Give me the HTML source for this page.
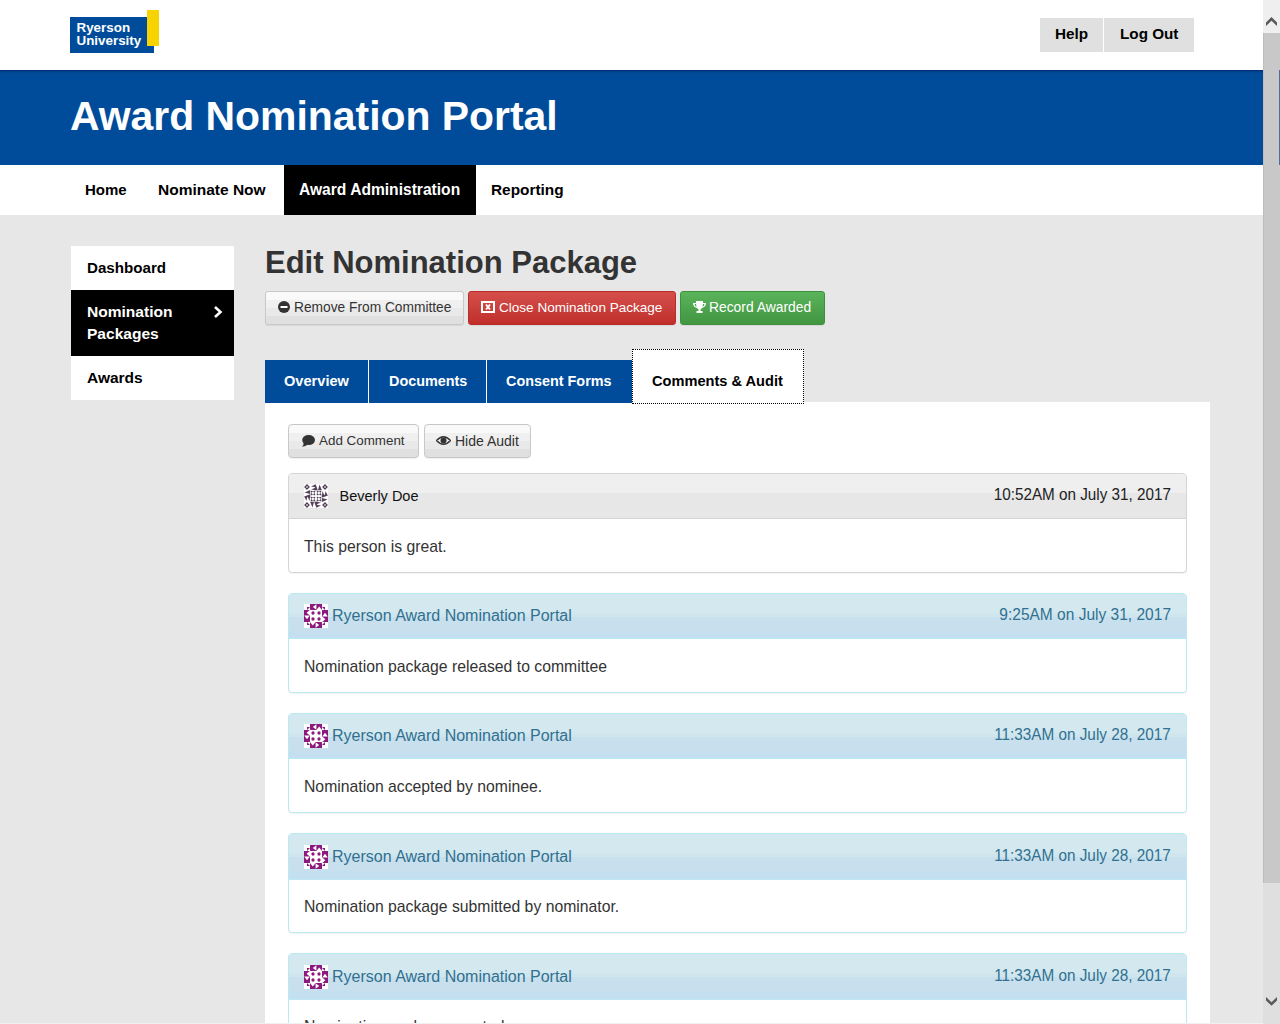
<!DOCTYPE html>
<html><head><meta charset="utf-8">
<style>
*{box-sizing:border-box;margin:0;padding:0}
html,body{width:1280px;height:1024px;overflow:hidden}
body{font-family:"Liberation Sans",sans-serif;background:#e7e7e7;position:relative;color:#333}
.a{position:absolute}
.t{position:absolute;white-space:nowrap;line-height:1}
.b{font-weight:bold}
#top{left:0;top:0;width:1263px;height:70px;background:#fff}
#band{left:0;top:70px;width:1263px;height:95px;background:linear-gradient(#002a6e 0,#003a85 1px,#00438f 2px,#004896 3px,#004c9a 4px)}
#nav{left:0;top:165px;width:1263px;height:50px;background:#fff}
.tbtn{top:18px;height:34px;background:#e0e0e0}
.nav{font-weight:bold;font-size:15px;color:#000;top:182px}
#side{left:71px;top:246px;width:163px;height:154px;background:#fff}
.side{font-weight:bold;font-size:15px;color:#000;left:87px}
.btn{position:absolute;border:1px solid #c8c8c8;border-radius:4px;box-shadow:0 1px 1px rgba(0,0,0,.07)}
.bdef{background:linear-gradient(#f9f9f9 0,#f9f9f9 8px,#f0f0f0 8px,#f0f0f0 16px,#e9e9e9 16px,#e9e9e9 24px,#e0e0e0 24px)}
.bdan{border-color:#b92c28;background:linear-gradient(#d64e4b,#c9403c 50%,#c12e2a)}
.bsuc{border-color:#3e8f3e;background:linear-gradient(#5ab45a,#4ea54e 50%,#429642)}
.bt{font-size:14px;top:9px}
.tab{position:absolute;top:360px;height:43px;background:#004c9a}
.tabt{font-weight:bold;font-size:15px;color:#fff;top:374px}
#content{left:265px;top:402px;width:945px;height:621px;background:#fff}
.panel{position:absolute;left:288px;width:899px;height:100px;border:1px solid #d5d5d5;border-radius:4px;background:#fff;box-shadow:0 1px 1px rgba(0,0,0,.05);overflow:hidden}
.ph{position:absolute;left:0;top:0;right:0;height:45px;background:linear-gradient(#efefef 0,#efefef 19px,#e7e7e7 19px);border-bottom:1px solid #d5d5d5}
.info{border-color:#bce8f1}
.tall .ph{height:46px}.tall .av{top:11px}.tall .pt{top:15px}.tall .dt{top:14px}
.info .ph{background:linear-gradient(#d3e8ef 0,#d3e8ef 19px,#cfe6ee 19px,#cfe6ee 23px,#c8e0ee 23px,#c8e0ee 37px,#c3dff0 37px);border-bottom-color:#bce8f1}
.pt{font-size:16px;top:14px;color:#333}
.info .pt{color:#31708f}
.dt{font-size:16px;top:13px;right:15px;color:#333;transform-origin:100% 50%;transform:scaleX(.956)}
.info .dt{color:#31708f}
.pb{font-size:15.75px;top:65px;left:15px;color:#333}
.av{position:absolute;left:15px;top:10px;width:24px;height:24px}
#sb{left:1263px;top:0;width:17px;height:1024px;background:#dfdfdf}
</style></head><body>
<svg width="0" height="0" style="position:absolute"><defs><symbol id="idm" viewBox="0 0 24 24"><rect width="24" height="24" fill="#fff"/><polygon points="6,0 18,0 18,6 6,6" fill="#8c1a7e"/><polygon points="24,6 24,18 18,18 18,6" fill="#8c1a7e"/><polygon points="18,24 6,24 6,18 18,18" fill="#8c1a7e"/><polygon points="0,18 0,6 6,6 6,18" fill="#8c1a7e"/><polygon points="12.4,0.2 8.8,3 12.4,5.8" fill="#fff"/><polygon points="12,6.4 15.2,2.6 18.4,6.4" fill="#fff"/><polygon points="3,3 6,3 3,6" fill="#8c1a7e"/><polygon points="23.8,12.4 21,8.8 18.2,12.4" fill="#fff"/><polygon points="17.6,12 21.4,15.2 17.6,18.4" fill="#fff"/><polygon points="21,3 21,6 18,3" fill="#8c1a7e"/><polygon points="11.6,23.8 15.2,21 11.6,18.2" fill="#fff"/><polygon points="12,17.6 8.8,21.4 5.6,17.6" fill="#fff"/><polygon points="21,21 18,21 21,18" fill="#8c1a7e"/><polygon points="0.2,11.6 3,15.2 5.8,11.6" fill="#fff"/><polygon points="6.4,12 2.6,8.8 6.4,5.6" fill="#fff"/><polygon points="3,21 3,18 6,21" fill="#8c1a7e"/><circle cx="9" cy="9" r="1.65" fill="#8c1a7e"/><circle cx="15" cy="9" r="1.65" fill="#8c1a7e"/><circle cx="9" cy="15" r="1.65" fill="#8c1a7e"/><circle cx="15" cy="15" r="1.65" fill="#8c1a7e"/></symbol><symbol id="idd" viewBox="0 0 24 24"><rect width="24" height="24" fill="#fff"/><path d="M3 0.1l2.9 2.9l-2.9 2.9l-2.9-2.9ZM3 2l1 1l-1 1l-1-1Z" fill="#544259" fill-rule="evenodd"/><polygon points="7,2.5 11.6,0.2 12.2,3.3" fill="#544259"/><polygon points="7,5.5 12,3.4 12.2,6.2" fill="#544259"/><polygon points="11.6,0.2 10.2,6.2 13.8,6.2" fill="#544259"/><polygon points="15.5,0.5 14,6.2 17.9,6.2" fill="#544259"/><path d="M21 0.1l2.9 2.9l-2.9 2.9l-2.9-2.9ZM21 2l1 1l-1 1l-1-1Z" fill="#544259" fill-rule="evenodd"/><polygon points="21.5,7 23.8,11.6 20.7,12.2" fill="#544259"/><polygon points="18.5,7 20.6,12 17.8,12.2" fill="#544259"/><polygon points="23.8,11.6 17.8,10.2 17.8,13.8" fill="#544259"/><polygon points="23.5,15.5 17.8,14 17.8,17.9" fill="#544259"/><path d="M21 18.1l2.9 2.9l-2.9 2.9l-2.9-2.9ZM21 20l1 1l-1 1l-1-1Z" fill="#544259" fill-rule="evenodd"/><polygon points="17,21.5 12.4,23.8 11.8,20.7" fill="#544259"/><polygon points="17,18.5 12,20.6 11.8,17.8" fill="#544259"/><polygon points="12.4,23.8 13.8,17.8 10.2,17.8" fill="#544259"/><polygon points="8.5,23.5 10,17.8 6.1,17.8" fill="#544259"/><path d="M3 18.1l2.9 2.9l-2.9 2.9l-2.9-2.9ZM3 20l1 1l-1 1l-1-1Z" fill="#544259" fill-rule="evenodd"/><polygon points="2.5,17 0.2,12.4 3.3,11.8" fill="#544259"/><polygon points="5.5,17 3.4,12 6.2,11.8" fill="#544259"/><polygon points="0.2,12.4 6.2,13.8 6.2,10.2" fill="#544259"/><polygon points="0.5,8.5 6.2,10 6.2,6.1" fill="#544259"/><rect x="7.5" y="7.5" width="2.9" height="2.9" fill="none" stroke="#544259" stroke-opacity="0.5" stroke-width="0.9"/><circle cx="7.5" cy="7.5" r="0.85" fill="#544259"/><circle cx="10.4" cy="7.5" r="0.85" fill="#544259"/><circle cx="7.5" cy="10.4" r="0.85" fill="#544259"/><circle cx="10.4" cy="10.4" r="0.85" fill="#544259"/><rect x="13.5" y="7.5" width="2.9" height="2.9" fill="none" stroke="#544259" stroke-opacity="0.5" stroke-width="0.9"/><circle cx="13.5" cy="7.5" r="0.85" fill="#544259"/><circle cx="16.4" cy="7.5" r="0.85" fill="#544259"/><circle cx="13.5" cy="10.4" r="0.85" fill="#544259"/><circle cx="16.4" cy="10.4" r="0.85" fill="#544259"/><rect x="7.5" y="13.5" width="2.9" height="2.9" fill="none" stroke="#544259" stroke-opacity="0.5" stroke-width="0.9"/><circle cx="7.5" cy="13.5" r="0.85" fill="#544259"/><circle cx="10.4" cy="13.5" r="0.85" fill="#544259"/><circle cx="7.5" cy="16.4" r="0.85" fill="#544259"/><circle cx="10.4" cy="16.4" r="0.85" fill="#544259"/><rect x="13.5" y="13.5" width="2.9" height="2.9" fill="none" stroke="#544259" stroke-opacity="0.5" stroke-width="0.9"/><circle cx="13.5" cy="13.5" r="0.85" fill="#544259"/><circle cx="16.4" cy="13.5" r="0.85" fill="#544259"/><circle cx="13.5" cy="16.4" r="0.85" fill="#544259"/><circle cx="16.4" cy="16.4" r="0.85" fill="#544259"/></symbol></defs></svg>
<div id="top" class="a"></div>
<div class="a" style="left:70px;top:17px;width:84px;height:36px;background:#004c9b"></div>
<div class="a" style="left:147px;top:10px;width:12px;height:36px;background:#f7d400"></div>
<div class="t b" style="left:76.5px;top:21px;font-size:13.4px;color:#fff">Ryerson</div>
<div class="t b" style="left:76.5px;top:34px;font-size:13.4px;color:#fff">University</div>
<div class="a tbtn" style="left:1040px;width:63px"></div>
<div class="a tbtn" style="left:1104px;width:90px"></div>
<div class="t b" style="left:1055px;top:26px;font-size:15.3px;color:#000">Help</div>
<div class="t b" style="left:1120px;top:26px;font-size:15.25px;color:#000">Log Out</div>

<div id="band" class="a"></div>
<div class="t b" style="left:70px;top:96px;font-size:40.9px;color:#fff">Award Nomination Portal</div>
<div id="nav" class="a"></div>
<div class="t nav" style="left:85px">Home</div>
<div class="t nav" style="left:158px;font-size:15.5px">Nominate Now</div>
<div class="a" style="left:284px;top:165px;width:192px;height:50px;background:#000"></div>
<div class="t nav" style="left:299px;color:#fff;font-size:15.6px">Award Administration</div>
<div class="t nav" style="left:491px;font-size:15.4px">Reporting</div>

<div id="side" class="a"></div>
<div class="t side" style="top:260px;font-size:15.15px">Dashboard</div>
<div class="a" style="left:71px;top:290px;width:163px;height:66px;background:#000"></div>
<div class="t side" style="top:304px;color:#fff;font-size:15.55px">Nomination</div>
<div class="t side" style="top:326px;color:#fff;font-size:15.55px">Packages</div>
<svg class="a" style="left:210px;top:303px" width="16" height="18" viewBox="0 0 16 18"><path d="M5 4 L10.5 9 L5 14" fill="none" stroke="#fff" stroke-width="2.6"/></svg>
<div class="t side" style="top:370px;font-size:15.5px">Awards</div>

<div class="t b" style="left:265px;top:247px;font-size:31px;color:#333">Edit Nomination Package</div>

<div class="btn bdef" style="left:265px;top:291px;width:199px;height:34px;border-radius:3px"></div>
<svg class="a" style="left:278px;top:301px" width="12" height="12" viewBox="0 0 12 12"><circle cx="6" cy="6" r="6" fill="#333"/><rect x="2.5" y="5" width="7" height="2" fill="#fff"/></svg>
<div class="t" style="left:294px;top:301px;font-size:13.75px;color:#333">Remove From Committee</div>

<div class="btn bdan" style="left:468px;top:291px;width:208px;height:34px;border-radius:3px"></div>
<svg class="a" style="left:481px;top:301px" width="14" height="12" viewBox="0 0 14 12"><rect x="1" y="1" width="12" height="10" fill="none" stroke="#fff" stroke-width="2"/><path d="M5 3.5 L9 8.5 M9 3.5 L5 8.5" stroke="#fff" stroke-width="2"/></svg>
<div class="t" style="left:499px;top:301px;font-size:13.55px;color:#fff">Close Nomination Package</div>

<div class="btn bsuc" style="left:680px;top:291px;width:145px;height:34px;border-radius:3px"></div>
<svg class="a" style="left:692px;top:301px" width="15" height="12" viewBox="0 0 15 12"><path d="M4 0 H11 V2 H14 Q14 6 10 7 Q9 8 8.5 8.5 V10 H10.5 V12 H4.5 V10 H6.5 V8.5 Q6 8 5 7 Q1 6 1 2 H4 Z M2.5 3 Q3 5.5 4.5 5.8 L4 3 Z M12.5 3 Q12 5.5 10.5 5.8 L11 3 Z" fill="#fff" fill-rule="evenodd"/></svg>
<div class="t" style="left:709px;top:301px;font-size:13.85px;color:#fff">Record Awarded</div>

<div id="content" class="a"></div>
<div class="tab" style="left:265px;width:103px"></div>
<div class="a" style="left:368px;top:360px;width:1px;height:43px;background:#fff"></div>
<div class="tab" style="left:369px;width:117px"></div>
<div class="a" style="left:486px;top:360px;width:1px;height:43px;background:#fff"></div>
<div class="tab" style="left:487px;width:145px"></div>
<div class="t tabt" style="left:284px;font-size:14.6px">Overview</div>
<div class="t tabt" style="left:389px;font-size:14.4px">Documents</div>
<div class="t tabt" style="left:506px;font-size:14.4px">Consent Forms</div>
<div class="a" style="left:632px;top:349px;width:172px;height:55px;background:#fff;border:1px dotted #000"></div>
<div class="t tabt" style="left:652px;color:#000;font-size:14.6px">Comments &amp; Audit</div>

<div class="btn bdef" style="left:288px;top:424px;width:131px;height:34px"></div>
<svg class="a" style="left:301px;top:435px" width="14" height="12" viewBox="0 0 14 12"><ellipse cx="7.6" cy="5.1" rx="6.4" ry="5" fill="#333"/><path d="M2.8 7 Q3 10.2 0.8 11.8 Q5 11.4 6.8 9.5 Z" fill="#333"/></svg>
<div class="t" style="left:319px;top:434px;font-size:13.4px;color:#333">Add Comment</div>
<div class="btn bdef" style="left:424px;top:424px;width:107px;height:34px"></div>
<svg class="a" style="left:436px;top:436px" width="15" height="9" viewBox="0 0 15 9"><path d="M0.5 4.5 Q7.5 -3 14.5 4.5 Q7.5 12 0.5 4.5 Z" fill="none" stroke="#333" stroke-width="1.3"/><circle cx="7.5" cy="4.5" r="3" fill="#333"/></svg>
<div class="t" style="left:455px;top:434px;font-size:14px;color:#333">Hide Audit</div>

<div class="panel" style="top:473px"><div class="ph"><svg class="av" width="24" height="24"><use href="#idd"/></svg><div class="t pt" style="left:50.5px;font-size:14.5px;color:#111;top:15px">Beverly Doe</div><div class="t dt" style="transform:scaleX(.953);color:#222">10:52AM on July 31, 2017</div></div><div class="t pb">This person is great.</div></div>
<div class="panel info" style="top:593px"><div class="ph"><svg class="av" width="24" height="24"><use href="#idm"/></svg><div class="t pt" style="left:43px">Ryerson Award Nomination Portal</div><div class="t dt" style="transform:scaleX(.970)">9:25AM on July 31, 2017</div></div><div class="t pb">Nomination package released to committee</div></div>
<div class="panel info" style="top:713px"><div class="ph"><svg class="av" width="24" height="24"><use href="#idm"/></svg><div class="t pt" style="left:43px">Ryerson Award Nomination Portal</div><div class="t dt">11:33AM on July 28, 2017</div></div><div class="t pb">Nomination accepted by nominee.</div></div>
<div class="panel info tall" style="top:833px"><div class="ph"><svg class="av" width="24" height="24"><use href="#idm"/></svg><div class="t pt" style="left:43px">Ryerson Award Nomination Portal</div><div class="t dt">11:33AM on July 28, 2017</div></div><div class="t pb">Nomination package submitted by nominator.</div></div>
<div class="panel info tall" style="top:953px"><div class="ph"><svg class="av" width="24" height="24"><use href="#idm"/></svg><div class="t pt" style="left:43px">Ryerson Award Nomination Portal</div><div class="t dt">11:33AM on July 28, 2017</div></div><div class="t pb">Nomination package created.</div></div>

<div class="a" style="left:0;top:1023px;width:1263px;height:1px;background:#f0f0f0"></div>
<div id="sb" class="a"></div>
<div class="a" style="left:1263px;top:0;width:17px;height:33px;background:#efefef"></div>
<div class="a" style="left:1263px;top:33px;width:17px;height:850px;background:#c8c8c8;border-left:1px solid #bdbdbd"></div>
<div class="a" style="left:1279px;top:70px;width:1px;height:95px;background:#4d6e98"></div>
<svg class="a" style="left:1263px;top:0" width="17" height="33" viewBox="0 0 17 33"><polygon points="3,22.5 8.5,17 14,22.5 14,26 8.5,20.8 3,26" fill="#5a5a5a"/></svg>
<svg class="a" style="left:1263px;top:991px" width="17" height="33" viewBox="0 0 17 33"><polygon points="3,6 8.5,11.2 14,6 14,9.5 8.5,14.8 3,9.5" fill="#5a5a5a"/></svg>
</body></html>
